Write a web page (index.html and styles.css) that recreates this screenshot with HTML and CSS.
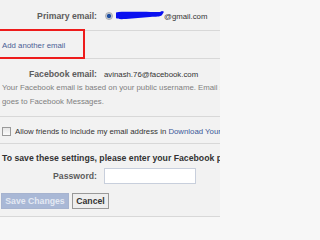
FILE: index.html
```html
<!DOCTYPE html>
<html>
<head>
<meta charset="utf-8">
<link rel="stylesheet" href="styles.css">
</head>
<body>
<div class="frame">
<div class="page">
  <div class="sec sec-primary">
    <span class="label">Primary email:</span>
    <span class="value">
      <span class="radio"></span>
      <svg class="mask" width="48" height="9" viewBox="0 0 48 9"><path d="M0,1.5 C6,0.5 14,1 22,0.8 C30,0.5 38,1.2 44,1 L46,0 L48,0.8 L46,4 C44,6 40,5.5 34,6 C26,6.5 18,7.5 10,8 C5,8.3 1,8.3 0,7 Z" fill="#0a10f0"/></svg>@gmail.com
    </span>
  </div>
  <div class="sec sec-add">
    <a class="link add">Add another email</a>
  </div>
  <div class="sec sec-fb">
    <div class="fb-row"><span class="label">Facebook email:</span><span class="value">avinash.76@facebook.com</span></div>
    <p class="note">Your Facebook email is based on your public username. Email sent to this address<br>goes to Facebook Messages.</p>
  </div>
  <div class="sec sec-check">
    <span class="checkbox"></span>
    <span class="check-text">Allow friends to include my email address in <a class="link">Download Your Information</a></span>
  </div>
  <div class="sec sec-save">
    <div class="save-title">To save these settings, please enter your Facebook password.</div>
    <div class="pw-row"><span class="label">Password:</span><span class="pw-input"></span></div>
    <div class="buttons"><span class="btn btn-save">Save Changes</span><span class="btn btn-cancel">Cancel</span></div>
  </div>
</div>
</div>
</body>
</html>
```
FILE: styles.css
```css
html, body {
  margin: 0;
  padding: 0;
  background: #f7f7f7;
  overflow: hidden;
}
.frame {
  width: 220px;
  height: 220px;
  overflow: hidden;
  font-family: "Liberation Sans", Arial, sans-serif;
  font-size: 7.8px;
  color: #333;
  background: #f7f7f7;
}
.page {
  width: 320px;
  background: #f2f2f2;
  display: flex;
  flex-direction: column;
}
.sec {
  border-bottom: 1px solid #d8d8d8;
  box-sizing: border-box;
  white-space: nowrap;
}
.label {
  display: inline-block;
  width: 97px;
  text-align: right;
  font-weight: bold;
  font-size: 8.7px;
  color: #5c5c5c;
  margin-right: 7px;
}
.value {
  display: inline-flex;
  align-items: center;
  color: #333;
}
.sec-primary {
  height: 31px;
  padding-top: 2px;
  display: flex;
  align-items: center;
}
.radio {
  width: 6px;
  height: 6px;
  border-radius: 50%;
  background: radial-gradient(circle, #1f4fa0 0 1.6px, #5a7fb8 2px, #c9ccd2 2.6px);
  border: 1px solid #a9acb2;
  margin-left: 1px;
  margin-right: 3px;
}
.mask {
  display: block;
  margin-top: -1px;
}
.link {
  color: #3b5998;
  text-decoration: none;
}
.sec-add {
  height: 28px;
  display: flex;
  align-items: center;
  padding-left: 2px;
  position: relative;
}
.sec-add::after {
  content: "";
  position: absolute;
  left: -10px;
  top: -2px;
  width: 91px;
  height: 26px;
  border: 2px solid #ee1c1c;
}
.add {
  color: #4a5f95;
  padding-top: 1px;
}
.sec-fb {
  height: 58px;
  padding-top: 8px;
}
.fb-row {
  display: flex;
  align-items: center;
  height: 14px;
}
.note {
  margin: 0;
  padding-left: 2px;
  line-height: 14px;
  color: #808080;
}
.sec-check {
  height: 27px;
  padding-top: 2px;
  padding-left: 2px;
  display: flex;
  align-items: center;
}
.checkbox {
  width: 7px;
  height: 7px;
  border: 1px solid #9a9a9a;
  background: linear-gradient(#e6e6e6, #fbfbfb);
  margin-right: 4px;
}
.check-text {
  color: #333;
}
.sec-save {
  height: 73px;
  padding-top: 7px;
}
.save-title {
  font-weight: bold;
  font-size: 8.7px;
  line-height: 14px;
  padding-left: 2px;
  color: #333;
}
.pw-row {
  display: flex;
  align-items: center;
  margin-top: 3px;
  height: 16px;
}
.pw-input {
  width: 90px;
  height: 14px;
  border: 1px solid #c8cfdc;
  background: #fff;
}
.buttons {
  display: flex;
  margin-top: 9px;
  padding-left: 1px;
  gap: 3px;
}
.btn {
  box-sizing: border-box;
  height: 16px;
  line-height: 14px;
  font-weight: bold;
  font-size: 8.7px;
  text-align: center;
}
.btn-save {
  width: 68px;
  background: #a9b8d6;
  border: 1px solid #a6b3cf;
  color: #e4e9f3;
}
.btn-cancel {
  width: 37px;
  background: #eeeeee;
  border: 1px solid #999;
  color: #333;
}
```
